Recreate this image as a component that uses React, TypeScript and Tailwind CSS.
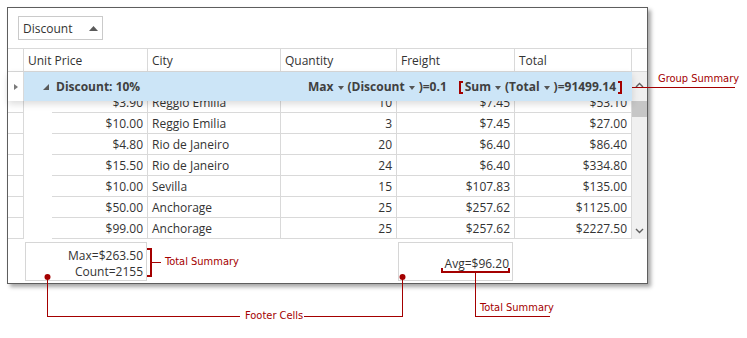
import React from 'react';

const rows: string[][] = [
  ['$3.90', 'Reggio Emilia', '10', '$7.45', '$53.10'],
  ['$10.00', 'Reggio Emilia', '3', '$7.45', '$27.00'],
  ['$4.80', 'Rio de Janeiro', '20', '$6.40', '$86.40'],
  ['$15.50', 'Rio de Janeiro', '24', '$6.40', '$334.80'],
  ['$10.00', 'Sevilla', '15', '$107.83', '$135.00'],
  ['$50.00', 'Anchorage', '25', '$257.62', '$1125.00'],
  ['$99.00', 'Anchorage', '25', '$257.62', '$2227.50'],
];

function Caret() {
  return (
    <svg width="6" height="4" viewBox="0 0 6 4" className="mx-[4px] mt-[1px]">
      <polygon points="0,0 6,0 3,4" fill="#555" />
    </svg>
  );
}

function DataRow({ r }: { r: string[] }) {
  const cell = 'h-full flex items-center pt-[1px] border-b border-r border-[#d9d9d9]';
  return (
    <div className="flex h-[21px] shrink-0">
      <div className="w-[16px] h-full border-b border-r border-[#d9d9d9]" />
      <div className="w-[28px] h-full" />
      <div className={`${cell} w-[96px] justify-end pr-[4px]`}>{r[0]}</div>
      <div className={`${cell} w-[133px] pl-[4px]`}>{r[1]}</div>
      <div className={`${cell} w-[116px] justify-end pr-[4px]`}>{r[2]}</div>
      <div className={`${cell} w-[118px] justify-end pr-[4px]`}>{r[3]}</div>
      <div className={`${cell} w-[117px] justify-end pr-[4px]`}>{r[4]}</div>
    </div>
  );
}

function ScrollBar() {
  return (
    <div className="w-[15px] h-[167px] flex flex-col bg-[#f0f0f0]">
      <div className="h-[29px] flex items-center justify-center pb-[4px]">
        <svg width="9" height="6" viewBox="0 0 9 6">
          <polyline points="1,5 4.5,1.5 8,5" fill="none" stroke="#606060" strokeWidth="1.4" />
        </svg>
      </div>
      <div className="h-[16px] bg-[#c6c6c6]" />
      <div className="flex-1" />
      <div className="h-[17px] flex items-center justify-center">
        <svg width="9" height="6" viewBox="0 0 9 6">
          <polyline points="1,1 4.5,4.5 8,1" fill="none" stroke="#606060" strokeWidth="1.4" />
        </svg>
      </div>
    </div>
  );
}

const note = "absolute text-[11px] leading-[13px] text-[#a40000] font-['DejaVu_Sans_Condensed','Liberation_Sans',sans-serif]";

function Annotations() {
  const red = '#a40000';
  return (
    <>
      <svg width="747" height="338" className="absolute left-0 top-0 pointer-events-none">
        <g stroke={red} fill="none" shapeRendering="crispEdges">
          <line x1="621" y1="87.5" x2="735" y2="87.5" strokeWidth="1" />
          <path d="M147 249 H151 V276 H147" strokeWidth="2" />
          <line x1="152" y1="262.5" x2="161" y2="262.5" strokeWidth="1" />
          <path d="M47.5 277 V316.5 H240" strokeWidth="1" />
          <path d="M304 316.5 H402.5 V277" strokeWidth="1" />
          <path d="M442 268 V272 H509 V268" strokeWidth="2" />
          <path d="M475.5 272 V316.5 H550" strokeWidth="1" />
        </g>
        <circle cx="47.5" cy="277" r="3" fill={red} />
        <circle cx="402.5" cy="277" r="3" fill={red} />
      </svg>
      <div className={`${note} left-[658px] top-[72px]`}>Group Summary</div>
      <div className={`${note} left-[165px] top-[255px]`}>Total Summary</div>
      <div className={`${note} left-[245px] top-[309px]`}>Footer Cells</div>
      <div className={`${note} left-[480px] top-[301px]`}>Total Summary</div>
    </>
  );
}

export default function App() {
  return (
    <div className="relative w-[747px] h-[338px] bg-white overflow-hidden font-['Open_Sans',sans-serif] text-[12px] text-[#333]">
      <div className="ml-[7px] mt-[7px] w-[641px] h-[277px] border border-[#5e5e5e] bg-white shadow-[3px_3px_4px_rgba(0,0,0,0.35)] flex flex-col">
        {/* toolbar */}
        <div className="h-[40px] shrink-0 pl-[10px] pt-[8px]">
          <div className="w-[85px] h-[24px] border border-[#cacaca] flex items-center justify-between pl-[4px] pr-[4px] pt-[1px]">
            <span>Discount</span>
            <svg width="9" height="5" viewBox="0 0 9 5">
              <polygon points="0,5 9,5 4.5,0" fill="#5a5a5a" />
            </svg>
          </div>
        </div>

        {/* header */}
        <div className="flex h-[24px] shrink-0 border-y border-[#d9d9d9]">
          <div className="w-[16px] border-r border-[#d9d9d9]" />
          <div className="w-[124px] border-r border-[#d9d9d9] pl-[4px] pt-[2px] flex items-center">Unit Price</div>
          <div className="w-[133px] border-r border-[#d9d9d9] pl-[4px] pt-[2px] flex items-center">City</div>
          <div className="w-[116px] border-r border-[#d9d9d9] pl-[4px] pt-[2px] flex items-center">Quantity</div>
          <div className="w-[118px] border-r border-[#d9d9d9] pl-[4px] pt-[2px] flex items-center">Freight</div>
          <div className="w-[117px] border-r border-[#d9d9d9] pl-[4px] pt-[2px] flex items-center">Total</div>
          <div className="w-[15px]" />
        </div>

        {/* body */}
        <div className="flex h-[167px] shrink-0">
          <div className="w-[624px] flex flex-col">
            <div className="relative z-10 flex h-[29px] shrink-0 shadow-[0_3px_7px_rgba(0,0,0,0.14)]">
              <div className="w-[16px] bg-white border-r border-[#d9d9d9] flex items-center justify-center">
                <svg width="4" height="6" viewBox="0 0 4 6">
                  <polygon points="0,0 4,3 0,6" fill="#7a7a7a" />
                </svg>
              </div>
              <div className="flex-1 bg-[#cce5f7] flex items-center font-bold text-[#404040] pl-[19px] pr-[10px] pt-[1px]">
                <svg width="6" height="6" viewBox="0 0 6 6" className="mr-[7px]">
                  <polygon points="6,0 6,6 0,6" fill="#595959" />
                </svg>
                <span>Discount: 10%</span>
                <div className="ml-auto flex items-center">
                  <span>Max</span>
                  <Caret />
                  <span>(Discount</span>
                  <Caret />
                  <span>)=0.1</span>
                  <span className="ml-[12px] mr-[2px] w-[4px] h-[13px] border-l-2 border-y-2 border-[#a40000]" />
                  <span>Sum</span>
                  <Caret />
                  <span>(Total</span>
                  <Caret />
                  <span>)=91499.14</span>
                  <span className="ml-[2px] w-[4px] h-[13px] border-r-2 border-y-2 border-[#a40000]" />
                </div>
              </div>
            </div>
            <div className="h-[12px] shrink-0 overflow-hidden flex flex-col justify-end">
              <DataRow r={rows[0]} />
            </div>
            {rows.slice(1).map((r, i) => (
              <DataRow key={i} r={r} />
            ))}
          </div>
          <ScrollBar />
        </div>

        {/* footer */}
        <div className="flex h-[44px] shrink-0">
          <div className="w-[17px]" />
          <div className="w-[122px] h-[39px] mt-[3px] border border-[#d6d6d6] flex flex-col items-end pt-[5px] pr-[3px] leading-[16px]">
            <span>Max=$263.50</span>
            <span>Count=2155</span>
          </div>
          <div className="w-[251px]" />
          <div className="w-[115px] h-[39px] mt-[3px] border border-[#d6d6d6] flex flex-col items-end pt-[13px] pr-[3px] leading-[16px]">
            <span>Avg=$96.20</span>
          </div>
        </div>
      </div>
      <Annotations />
    </div>
  );
}
